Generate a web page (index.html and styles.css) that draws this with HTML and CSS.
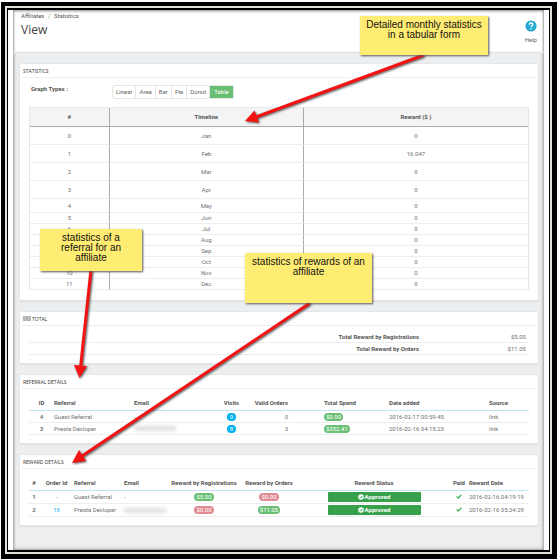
FILE: index.html
```html
<!DOCTYPE html>
<html lang="en">

<head>
    <meta charset="utf-8">
    <title>Affiliates / Statistics</title>
    <link rel="stylesheet" href="styles.css">
</head>

<body>
    <div class="frame">
        <div class="frame-inner">
            <div class="page">
                <header class="page-head">
                    <div>
                        <div class="breadcrumb"><a href="#">Affiliates</a> <span>/</span> <a href="#">Statistics</a></div>
                        <h1>View</h1>
                    </div>
                    <a class="help" href="#">
                        <svg width="12" height="12" viewBox="0 0 12 12">
                            <circle cx="6" cy="6" r="5.6" fill="#25a9d0" />
                            <path d="M4.200 4.700C4.300 2.400 7.900 2.500 7.800 4.600C7.700 5.800 6.100 5.800 6.100 7.100M6.100 8.200V9.500" fill="none" stroke="#fff" stroke-width="1.4" />
                        </svg>
                        Help
                    </a>
                </header>

                <main>
                    <section class="panel">
                        <h2>STATISTICS</h2>
                        <div class="graph-types">
                            <span class="graph-label">Graph Types :</span>
                            <div class="btn-group">
                                <button>Linear</button>
                                <button>Area</button>
                                <button>Bar</button>
                                <button>Pie</button>
                                <button>Donut</button>
                                <button class="active">Table</button>
                            </div>
                        </div>
                        <table class="stats">
                            <thead>
                                <tr><th class="col-num">#</th><th class="col-time">Timeline</th><th>Reward ($ )</th></tr>
                            </thead>
                            <tbody>
                                <tr class="tall"><td>0</td><td>Jan</td><td>0</td></tr>
                                <tr class="tall"><td>1</td><td>Feb</td><td>16.047</td></tr>
                                <tr class="tall"><td>2</td><td>Mar</td><td>0</td></tr>
                                <tr class="tall"><td>3</td><td>Apr</td><td>0</td></tr>
                                <tr class="mid"><td>4</td><td>May</td><td>0</td></tr>
                                <tr><td>5</td><td>Jun</td><td>0</td></tr>
                                <tr><td>6</td><td>Jul</td><td>0</td></tr>
                                <tr><td>7</td><td>Aug</td><td>0</td></tr>
                                <tr><td>8</td><td>Sep</td><td>0</td></tr>
                                <tr><td>9</td><td>Oct</td><td>0</td></tr>
                                <tr><td>10</td><td>Nov</td><td>0</td></tr>
                                <tr><td>11</td><td>Dec</td><td>0</td></tr>
                            </tbody>
                        </table>
                    </section>

                    <section class="panel">
                        <h2>
                            <svg width="8" height="5" viewBox="0 0 8 5" fill="none" stroke="#666" stroke-width=".5">
                                <path d="M.5 .5H3.500V4.500H.5ZM1 1L3 4M3 1L1 4M4.500 .5H7.500V4.500H4.500ZM5 1L7 4M7 1L5 4" />
                            </svg>
                            TOTAL
                        </h2>
                        <table class="total">
                            <tr><th>Total Reward by Registrations</th><td>$5.00</td></tr>
                            <tr><th>Total Reward by Orders</th><td>$11.05</td></tr>
                        </table>
                    </section>

                    <section class="panel">
                        <h2>REFERRAL DETAILS</h2>
                        <table class="list referral">
                            <colgroup>
                                <col style="width: 5%"><col style="width: 16%"><col style="width: 17%"><col style="width: 5%"><col style="width: 16%"><col style="width: 13%"><col style="width: 20%"><col style="width: 8%">
                            </colgroup>
                            <thead>
                                <tr>
                                    <th class="center">ID</th>
                                    <th>Referral</th>
                                    <th>Email</th>
                                    <th class="center">Visits</th>
                                    <th class="orders">Valid Orders</th>
                                    <th>Total Spend</th>
                                    <th>Date added</th>
                                    <th>Source</th>
                                </tr>
                            </thead>
                            <tbody>
                                <tr>
                                    <td class="center strong">4</td>
                                    <td>Guest Referral</td>
                                    <td>-</td>
                                    <td class="center"><span class="count">0</span></td>
                                    <td class="orders">0</td>
                                    <td><span class="badge green">$0.00</span></td>
                                    <td>2016-02-17 00:59:45</td>
                                    <td>link</td>
                                </tr>
                                <tr>
                                    <td class="center strong">3</td>
                                    <td>Presta Devloper</td>
                                    <td><span class="hidden-mail"></span></td>
                                    <td class="center"><span class="count">8</span></td>
                                    <td class="orders">3</td>
                                    <td><span class="badge green">$352.41</span></td>
                                    <td>2016-02-16 04:15:23</td>
                                    <td>link</td>
                                </tr>
                            </tbody>
                        </table>
                    </section>

                    <section class="panel">
                        <h2>REWARD DETAILS</h2>
                        <table class="list reward">
                            <colgroup>
                                <col style="width: 2%"><col style="width: 7%"><col style="width: 10%"><col style="width: 9%"><col style="width: 14%"><col style="width: 12%"><col style="width: 30%"><col style="width: 4%"><col style="width: 12%">
                            </colgroup>
                            <thead>
                                <tr>
                                    <th class="center">#</th>
                                    <th class="center">Order Id</th>
                                    <th>Referral</th>
                                    <th>Email</th>
                                    <th class="center">Reward by Registrations</th>
                                    <th class="center">Reward by Orders</th>
                                    <th class="center">Reward Status</th>
                                    <th class="center">Paid</th>
                                    <th>Reward Date</th>
                                </tr>
                            </thead>
                            <tbody>
                                <tr>
                                    <td class="center strong">1</td>
                                    <td class="center">-</td>
                                    <td>Guest Referral</td>
                                    <td>-</td>
                                    <td class="center"><span class="badge green">$5.00</span></td>
                                    <td class="center"><span class="badge red">$0.00</span></td>
                                    <td><span class="status"><svg width="6" height="6" viewBox="0 0 6 6"><circle cx="3" cy="3" r="2.8" fill="#fff" /><path d="M1.500 3L2.600 4.100L4.600 2" fill="none" stroke="#36a14a" /></svg>Approved</span></td>
                                    <td class="center"><svg class="check" width="6" height="5" viewBox="0 0 6 5"><path d="M.6 2.400L2.200 4L5.400 .8" /></svg></td>
                                    <td>2016-02-16 04:19:19</td>
                                </tr>
                                <tr>
                                    <td class="center strong">2</td>
                                    <td class="center"><a href="#">18</a></td>
                                    <td>Presta Devloper</td>
                                    <td><span class="hidden-mail"></span></td>
                                    <td class="center"><span class="badge red">$0.00</span></td>
                                    <td class="center"><span class="badge green">$11.05</span></td>
                                    <td><span class="status"><svg width="6" height="6" viewBox="0 0 6 6"><circle cx="3" cy="3" r="2.8" fill="#fff" /><path d="M1.500 3L2.600 4.100L4.600 2" fill="none" stroke="#36a14a" /></svg>Approved</span></td>
                                    <td class="center"><svg class="check" width="6" height="5" viewBox="0 0 6 5"><path d="M.6 2.400L2.200 4L5.400 .8" /></svg></td>
                                    <td>2016-02-16 05:24:29</td>
                                </tr>
                            </tbody>
                        </table>
                    </section>
                </main>
            </div>
        </div>
    </div>

    <!-- annotations over the page -->
    <svg class="arrows" width="558" height="560" viewBox="0 0 558 560">
        <g stroke="#f31313" stroke-width="3" fill="#f31313">
            <path d="M424 55L256 117" />
            <path d="M91 270L80.500 368" />
            <path d="M310 303L82 456" />
            <g stroke="none">
                <path d="M245 121L254.500 110.500L259 122.500Z" />
                <path d="M79.500 378L74 365L87 366Z" />
                <path d="M72 463L79 450L86 461Z" />
            </g>
        </g>
    </svg>
    <div class="note note-table">Detailed monthly statistics in a tabular form</div>
    <div class="note note-referral">statistics of a referral for an affiliate</div>
    <div class="note note-reward">statistics of rewards of an affiliate</div>
</body>

</html>
```
FILE: styles.css
```css
* {
    box-sizing: border-box;
}

body {
    margin: 0;
    padding: 2px 1px 1px;
    min-height: 100vh;
    display: flex;
    position: relative;
    background-color: #fff;
    color: #707070;
    font-family: Roboto, "Open Sans", sans-serif;
    font-size: 6px;
    line-height: 8px;
}

a {
    color: #25b9e8;
    text-decoration: none;
}

/* picture frame */
.frame {
    flex: 1;
    display: flex;
    border: 4px solid #000;
    border-right-width: 5px;
    border-bottom-width: 5px;
    padding: 2px;
    background-color: #e4dfd8;
}

.frame-inner {
    flex: 1;
    display: flex;
    border: 1px solid #000;
    border-top-width: 2px;
    border-bottom-width: 2px;
    padding: 0 5px;
    background-color: #fff;
}

.page {
    flex: 1;
    min-width: 0;
    background-color: #eceef0;
    box-shadow: inset 0 0 3px 1px #999;
}

.page-head {
    display: flex;
    justify-content: space-between;
    height: 43px;
    padding: 2px 7px 0 8px;
    background-color: #fff;
    border-bottom: 1px solid #e2e5e7;
    box-shadow: inset 0 2px 3px -1px #888, inset 2px 0 2px -1px #aaa, inset -2px 0 2px -1px #aaa;
}

.breadcrumb a {
    color: #555;
}

.breadcrumb span {
    margin: 0 2px;
    color: #72b844;
}

h1 {
    margin: 2px 0 0;
    font-family: "Open Sans", sans-serif;
    font-size: 12px;
    line-height: 16px;
    font-weight: normal;
    color: #444;
}

.help {
    display: flex;
    flex-direction: column;
    align-items: center;
    gap: 4px;
    padding-top: 8px;
    color: #666;
}

main {
    display: flex;
    flex-direction: column;
    gap: 10px;
    padding: 10px 5px 24px 6px;
}

.panel {
    padding: 0 9px 8px;
    background-color: #fff;
    border: 1px solid #e4e7e9;
    border-radius: 2px;
    box-shadow: 0 1px 1px #dde0e2;
}

h2 {
    display: flex;
    align-items: center;
    gap: 1px;
    height: 14px;
    margin: 0 -7px;
    padding: 0 1px;
    border-bottom: 1px solid #eee;
    font-family: "Open Sans", sans-serif;
    font-size: 5px;
    font-weight: normal;
    color: #333;
}

.graph-types {
    display: flex;
    padding: 7px 0 8px 2px;
}

.graph-label {
    width: 81px;
    font-weight: bold;
    color: #555;
}

.btn-group {
    display: flex;
    border: 1px solid #e6e6e6;
    border-radius: 2px;
}

button {
    height: 12px;
    padding: 0 3px;
    border: 0;
    border-right: 1px solid #e6e6e6;
    background-color: #fff;
    color: #666;
    font: inherit;
}

button.active {
    padding: 0 4px;
    border-right: 0;
    background-color: #6abf74;
    color: #fff;
}

table {
    width: 100%;
    border-collapse: separate;
    border-spacing: 0;
    table-layout: fixed;
}

th,
td {
    padding: 0;
    white-space: nowrap;
    border-bottom: 1px solid #eee;
}

th {
    color: #555;
}

/* monthly table */
.stats {
    margin-bottom: 2px;
    border: 1px solid #e8e8e8;
    border-bottom: 0;
    text-align: center;
}

.stats th {
    height: 19px;
    background-color: #f4f4f4;
    border-bottom: 1px solid #aaa;
}

.stats td {
    height: 11px;
}

.stats th:not(:last-child),
.stats td:not(:last-child) {
    border-right: 1px solid #aaa;
}

.stats .tall td {
    height: 18px;
}

.stats .mid td {
    height: 14px;
}

.col-num {
    width: 16%;
}

.col-time {
    width: 39%;
}

.total {
    margin-top: 5px;
    text-align: right;
}

.total th {
    width: 78%;
    height: 12px;
    text-align: right;
}

.total td {
    padding-right: 3px;
}

/* referral and reward lists */
.list {
    margin-top: 7px;
    text-align: left;
}

.list th {
    height: 15px;
    border-bottom: 1px solid #bfe3f5;
}

.list td {
    height: 12px;
}

.list .center {
    text-align: center;
}

.list .orders {
    padding-right: 36px;
    text-align: right;
}

.strong {
    font-weight: bold;
}

.list.reward td {
    height: 13px;
}

.count,
.badge {
    display: inline-block;
    padding: 0 2px;
    border-radius: 4px;
    color: #fff;
}

.count {
    background-color: #00aff0;
    padding: 0 3px;
}

.green {
    background-color: #6abf74;
}

.red {
    background-color: #e08a92;
}

.hidden-mail {
    display: block;
    width: 42px;
    height: 3px;
    background-color: #ccc;
    filter: blur(2px);
}

.status {
    display: flex;
    align-items: center;
    justify-content: center;
    gap: 1px;
    width: 93px;
    height: 10px;
    margin: 0 auto;
    border-radius: 1px;
    background-color: #36a14a;
    color: #fff;
    font-weight: bold;
}

.check {
    fill: none;
    stroke: #45b35a;
    stroke-width: 1.3;
}

/* annotations */
.arrows {
    position: absolute;
    top: 0;
    left: 0;
    filter: drop-shadow(1px 1px 1px #555);
}

.note {
    position: absolute;
    padding: 4px 6px;
    background-color: #ffec73;
    box-shadow: 1px 1px 2px #555;
    color: #111;
    font-family: "Liberation Sans", Arial, sans-serif;
    font-size: 10px;
    line-height: 10px;
    text-align: center;
}

.note-table {
    top: 16px;
    left: 360px;
    width: 128px;
    height: 39px;
}

.note-referral {
    top: 229px;
    left: 40px;
    width: 102px;
    height: 42px;
    padding: 4px 16px;
}

.note-reward {
    top: 253px;
    left: 245px;
    width: 127px;
    height: 50px;
}
```
